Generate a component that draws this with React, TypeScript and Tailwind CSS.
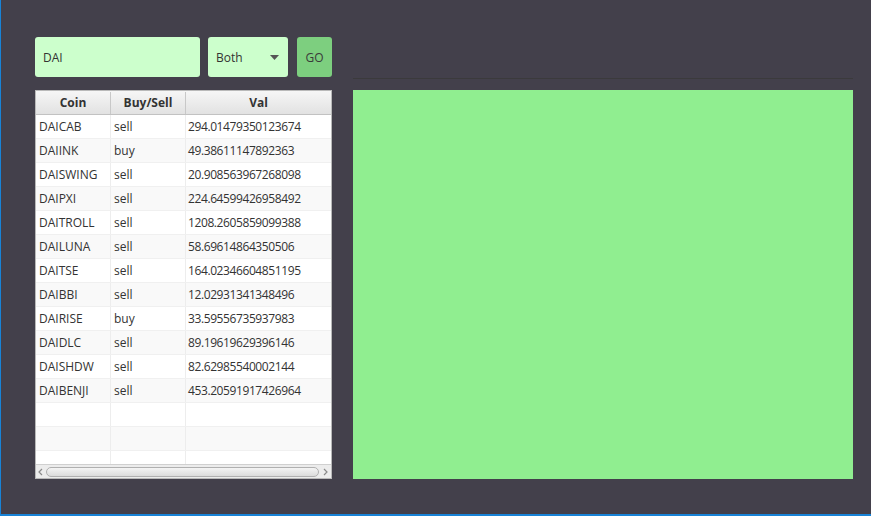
import React from "react";

const rows: [string, string, string][] = [
  ["DAICAB", "sell", "294.01479350123674"],
  ["DAIINK", "buy", "49.38611147892363"],
  ["DAISWING", "sell", "20.908563967268098"],
  ["DAIPXI", "sell", "224.64599426958492"],
  ["DAITROLL", "sell", "1208.2605859099388"],
  ["DAILUNA", "sell", "58.69614864350506"],
  ["DAITSE", "sell", "164.02346604851195"],
  ["DAIBBI", "sell", "12.02931341348496"],
  ["DAIRISE", "buy", "33.59556735937983"],
  ["DAIDLC", "sell", "89.19619629396146"],
  ["DAISHDW", "sell", "82.62985540002144"],
  ["DAIBENJI", "sell", "453.20591917426964"],
];

const font = { fontFamily: '"Open Sans", "Noto Sans", sans-serif' };

function Row({ cells, odd }: { cells: string[]; odd: boolean }) {
  return (
    <div className={`flex h-6 shrink-0 border-b border-[#f0f0f0] ${odd ? "bg-[#f9f9f9]" : "bg-white"}`}>
      <div className="w-[75px] shrink-0 border-r border-[#ededed] pl-[3px] flex items-center">{cells[0]}</div>
      <div className="w-[75px] shrink-0 border-r border-[#ededed] pl-[3px] flex items-center">{cells[1]}</div>
      <div className="flex-1 pl-[2px] flex items-center tracking-[-0.4px]">{cells[2]}</div>
    </div>
  );
}

export default function App() {
  return (
    <div
      className="w-[871px] h-[516px] bg-[#43404b] border-l border-b-2 border-[#1883d7] pl-[34px] pt-[37px] flex gap-[21px] text-[12px] text-[#333]"
      style={font}
    >
      {/* Left column */}
      <div className="w-[297px] flex flex-col">
        <div className="flex h-10">
          <div className="w-[165px] rounded-[3px] bg-[#ccffcc] flex items-center pl-[8px] pt-px text-[#333]">DAI</div>
          <div className="w-[80px] ml-[8px] rounded-[3px] bg-[#ccffcc] flex items-center justify-between pl-[8px] pr-[9px] pt-px">
            <span>Both</span>
            <svg width="9" height="5" viewBox="0 0 9 5">
              <path d="M0 0 L9 0 L4.5 5 Z" fill="#555" />
            </svg>
          </div>
          <div className="w-[35px] ml-[9px] rounded-[3px] bg-[#7dcf7f] flex items-center justify-center pt-px text-[#3a3a3a]">GO</div>
        </div>

        {/* Table */}
        <div className="mt-[13px] h-[389px] border border-[#b9b9b9] bg-white flex flex-col overflow-hidden">
          <div className="flex h-6 shrink-0 border-b border-[#c2c2c2] bg-gradient-to-b from-[#f6f6f6] to-[#e2e2e2] font-bold text-[#333] pt-px">
            <div className="w-[75px] shrink-0 border-r border-[#c8c8c8] flex items-center justify-center">Coin</div>
            <div className="w-[75px] shrink-0 border-r border-[#c8c8c8] flex items-center justify-center">Buy/Sell</div>
            <div className="flex-1 flex items-center justify-center">Val</div>
          </div>
          <div className="flex-1 flex flex-col overflow-hidden">
            {rows.map((r, i) => (
              <Row key={r[0]} cells={r} odd={i % 2 === 1} />
            ))}
            {[0, 1, 2].map((i) => (
              <Row key={"e" + i} cells={["", "", ""]} odd={i % 2 === 1} />
            ))}
          </div>
          {/* Horizontal scrollbar */}
          <div className="h-[14px] shrink-0 border-t border-[#d0d0d0] bg-[#ececec] flex items-center">
            <svg width="10" height="12" viewBox="0 0 10 12" className="shrink-0">
              <path d="M6 3 L3 6 L6 9" stroke="#8a8a8a" strokeWidth="1.2" fill="none" />
            </svg>
            <div className="flex-1 h-[10px] rounded-full border border-[#b0b0b0] bg-gradient-to-b from-[#f4f4f4] to-[#dcdcdc]" />
            <svg width="12" height="12" viewBox="0 0 12 12" className="shrink-0">
              <path d="M5 3 L8 6 L5 9" stroke="#8a8a8a" strokeWidth="1.2" fill="none" />
            </svg>
          </div>
        </div>
      </div>

      {/* Right column */}
      <div className="w-[500px] flex flex-col">
        <div className="h-[41px]" />
        <div className="h-px bg-[#3b3a3c]" />
        <div className="mt-[11px] h-[389px] bg-[#90ee90]" />
      </div>
    </div>
  );
}
